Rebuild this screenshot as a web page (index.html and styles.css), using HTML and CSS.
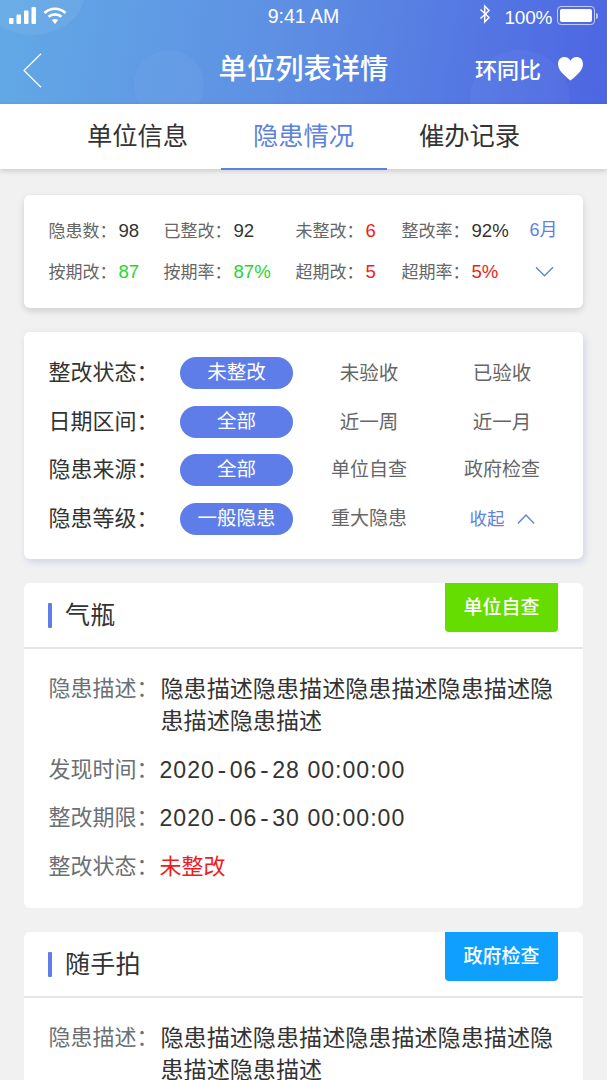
FILE: index.html
```html
<!DOCTYPE html>
<html lang="zh-CN">
<head>
<meta charset="utf-8">
<title>单位列表详情</title>
<link rel="stylesheet" href="styles.css">
</head>
<body>
<div class="screen">
  <header class="hero">
    <span class="orb orb-a"></span><span class="orb orb-b"></span><span class="orb orb-c"></span>
    <div class="status">
      <div class="status-left">
        <svg class="ico-signal" viewBox="0 0 28 17" width="28" height="17"><g fill="#fff"><rect x="0" y="11" width="4.500" height="6" rx="1"/><rect x="7.500" y="7.500" width="4.500" height="9.500" rx="1"/><rect x="15" y="3.500" width="4.500" height="13.500" rx="1"/><rect x="22.500" y="0" width="4.500" height="17" rx="1"/></g></svg>
        <svg class="ico-wifi" viewBox="0 0 24 17" width="24" height="17"><g fill="none" stroke="#fff" stroke-width="2.600"><path d="M1.500 6C7.500 .4 16.500 .4 22.500 6"/><path d="M5.500 9.800C9.300 6.600 14.700 6.600 18.500 9.800"/></g><path d="M8.800 13C10.700 11.500 13.300 11.500 15.200 13L12 17Z" fill="#fff"/></svg>
      </div>
      <div class="status-time">9:41 AM</div>
      <div class="status-right">
        <svg class="ico-bt" viewBox="0 0 12 20" width="12" height="20"><path d="M1.500 5.500L10 13.500L5.700 18V2L10 6.500L1.500 14.500" fill="none" stroke="#fff" stroke-width="1.500"/></svg>
        <span class="battery-pct">100%</span>
        <span class="battery"><span class="battery-fill"></span></span>
        <span class="battery-tip"></span>
      </div>
    </div>
    <div class="nav">
      <svg class="ico-back" viewBox="0 0 19 35" width="19" height="35"><path d="M18 .7L1 17.500L18 34.300" fill="none" stroke="#fff" stroke-width="1.200"/></svg>
      <h1 class="nav-title">单位列表详情</h1>
      <div class="nav-right">
        <span class="nav-compare">环同比</span>
        <svg class="ico-heart" viewBox="0 0 28 26" width="27" height="25"><path d="M14 25.500C9 21 1 15.500 1 8.200C1 3.800 4.200 1 7.700 1C10.500 1 12.800 2.500 14 5C15.200 2.500 17.500 1 20.300 1C23.800 1 27 3.800 27 8.200C27 15.500 19 21 14 25.500Z" fill="#fff"/></svg>
      </div>
    </div>
  </header>

  <nav class="tabs">
    <div class="tab">单位信息</div>
    <div class="tab tab-active">隐患情况</div>
    <div class="tab">催办记录</div>
  </nav>

  <main class="content">
    <section class="card stats">
      <div class="stat"><span class="stat-k">隐患数：</span><span>98</span></div>
      <div class="stat"><span class="stat-k">已整改：</span><span>92</span></div>
      <div class="stat"><span class="stat-k">未整改：</span><span class="red">6</span></div>
      <div class="stat"><span class="stat-k">整改率：</span><span>92%</span></div>
      <div class="stat month">6月</div>
      <div class="stat"><span class="stat-k">按期改：</span><span class="green">87</span></div>
      <div class="stat"><span class="stat-k">按期率：</span><span class="green">87%</span></div>
      <div class="stat"><span class="stat-k">超期改：</span><span class="red">5</span></div>
      <div class="stat"><span class="stat-k">超期率：</span><span class="red">5%</span></div>
      <div class="stat month month-arrow"><svg viewBox="0 0 20 11" width="19" height="11"><path d="M1 1L10 10L19 1" fill="none" stroke="#5f82dc" stroke-width="1.400"/></svg></div>
    </section>

    <section class="card filters">
      <div class="f-label">整改状态：</div><div class="pill">未整改</div><div class="f-opt">未验收</div><div class="f-opt">已验收</div>
      <div class="f-label">日期区间：</div><div class="pill">全部</div><div class="f-opt">近一周</div><div class="f-opt">近一月</div>
      <div class="f-label">隐患来源：</div><div class="pill">全部</div><div class="f-opt f-opt-long">单位自查</div><div class="f-opt f-opt-long">政府检查</div>
      <div class="f-label">隐患等级：</div><div class="pill">一般隐患</div><div class="f-opt f-opt-long">重大隐患</div>
      <div class="f-opt f-collapse">收起<svg viewBox="0 0 20 12" width="18" height="12"><path d="M1 11L10 1.500L19 11" fill="none" stroke="#5f82dc" stroke-width="1.500"/></svg></div>
    </section>

    <article class="card item">
      <div class="item-head"><span class="item-bar"></span><h2 class="item-title">气瓶</h2><span class="badge badge-green">单位自查</span></div>
      <div class="item-body">
        <div class="row"><span class="row-k">隐患描述：</span><span class="row-v">隐患描述隐患描述隐患描述隐患描述隐患描述隐患描述</span></div>
        <div class="row"><span class="row-k">发现时间：</span><span class="row-v row-date">2020<span class="dash">-</span>06<span class="dash">-</span>28 00:00:00</span></div>
        <div class="row"><span class="row-k">整改期限：</span><span class="row-v row-date">2020<span class="dash">-</span>06<span class="dash">-</span>30 00:00:00</span></div>
        <div class="row"><span class="row-k">整改状态：</span><span class="row-v row-alert">未整改</span></div>
      </div>
    </article>

    <article class="card item">
      <div class="item-head"><span class="item-bar"></span><h2 class="item-title">随手拍</h2><span class="badge badge-blue">政府检查</span></div>
      <div class="item-body">
        <div class="row"><span class="row-k">隐患描述：</span><span class="row-v">隐患描述隐患描述隐患描述隐患描述隐患描述隐患描述</span></div>
      </div>
    </article>
  </main>
</div>
</body>
</html>
```
FILE: styles.css
```css
* { box-sizing: border-box; }
html, body { margin: 0; padding: 0; height: 1080px; overflow: hidden; }
body {
  background: #f1f1f1;
  color: #333;
  font-family: "Liberation Sans", "Noto Sans CJK SC", sans-serif;
}
.screen { width: 607px; height: 1080px; overflow: hidden; }

/* Header */
.hero {
  position: relative;
  height: 104px;
  overflow: hidden;
  color: #fff;
  background: linear-gradient(100deg, #62a9e6 0%, #5e90e3 45%, #4d65e2 100%);
}
.orb { position: absolute; border-radius: 50%; background: rgba(255, 255, 255, .04); }
.orb-a { left: 134px; top: 50px; width: 70px; height: 70px; }
.orb-b { left: 470px; top: 50px; width: 100px; height: 100px; }
.orb-c { left: -20px; top: -50px; width: 105px; height: 85px; background: rgba(255, 255, 255, .06); }

.status {
  position: relative;
  height: 32px;
  padding: 0 9px;
  display: grid;
  grid-template-columns: 1fr auto 1fr;
  align-items: center;
}
.status-left { display: flex; align-items: center; gap: 6px; margin-top: -1px; }
.status-time { font-size: 19.500px; line-height: 32px; }
.status-right { display: flex; align-items: center; justify-content: flex-end; }
.ico-bt { margin-right: 14px; margin-top: -5px; }
.battery-pct { font-size: 19px; margin-right: 5px; margin-top: 4px; letter-spacing: -.3px; }
.battery {
  width: 38px; height: 19px;
  padding: 2px;
  border: 1.500px solid rgba(255, 255, 255, .65);
  border-radius: 4px;
  margin-top: -1px;
}
.battery-fill { display: block; height: 100%; background: #fff; border-radius: 2px; }
.battery-tip { width: 2px; height: 6px; margin-left: 1px; background: rgba(255, 255, 255, .6); border-radius: 0 2px 2px 0; }

.nav {
  position: relative;
  height: 72px;
  display: grid;
  grid-template-columns: 1fr auto 1fr;
  align-items: center;
  padding: 0 23px;
}
.ico-back { margin-top: 3px; }
.nav-title { margin: 0; font-size: 28.300px; line-height: 72px; font-weight: 500; margin-top: 1px; }
.nav-right { display: flex; align-items: center; justify-content: flex-end; gap: 16px; margin-top: -1px; }
.nav-compare { font-size: 22px; font-weight: 500; }

/* Tabs */
.tabs {
  position: relative;
  height: 65px;
  display: grid;
  grid-template-columns: 166px 166px 166px;
  justify-content: center;
  background: #fff;
  box-shadow: 0 2px 5px rgba(0, 0, 0, .16);
}
.tab { text-align: center; font-size: 25.300px; line-height: 65px; color: #333; }
.tab-active { color: #5f82dc; border-bottom: 2px solid #5f82dc; height: 66px; }

/* Cards */
.content { padding: 26px 24px 0; display: flex; flex-direction: column; gap: 24px; }
.card { background: #fff; border-radius: 6px; }

.stats {
  height: 113px;
  padding: 15px 0 0 24.500px;
  display: grid;
  grid-template-columns: 115px 132px 106px 128px auto;
  grid-auto-rows: 41px;
  box-shadow: 0 3px 7px rgba(0, 0, 0, .14);
}
.stat { font-size: 18.600px; line-height: 41px; white-space: nowrap; color: #333; }
.stat-k { color: #666; font-size: 17px; margin-right: 2px; }
.month { color: #5f82dc; font-size: 18px; display: flex; align-items: center; }
.month-arrow svg { margin-left: 5px; }
.red { color: #f01c1c; }
.green { color: #1fd631; }

.filters {
  height: 227px;
  padding: 25px 0 0 24.500px;
  display: grid;
  grid-template-columns: 131.500px 113px 152px 114px;
  grid-auto-rows: 32px;
  row-gap: 16.600px;
  align-items: center;
  box-shadow: 2px 3px 7px rgba(90, 110, 200, .22);
}
.f-label { font-size: 22px; line-height: 32px; color: #333; white-space: nowrap; }
.pill {
  height: 32px;
  border-radius: 16px;
  background: #5f7de8;
  color: #fff;
  text-align: center;
  font-size: 19.500px;
  line-height: 31px;
}
.f-opt { font-size: 19.500px; line-height: 32px; text-align: center; color: #666; white-space: nowrap; }
.f-opt-long { font-size: 19px; }
.f-collapse { color: #5f82dc; font-size: 17.500px; display: flex; align-items: center; justify-content: center; gap: 12px; }

.item { position: relative; overflow: hidden; }
.item-head {
  height: 66px;
  padding: 0 0 0 24px;
  display: flex;
  align-items: center;
  border-bottom: 2px solid #e6e6e6;
}
.item-bar { width: 3.500px; height: 25px; background: #5f7de8; border-radius: 1px; margin-right: 14px; }
.item-title { margin: 0 0 0 -.5px; font-size: 25px; font-weight: 400; line-height: 66px; letter-spacing: .3px; }
.badge {
  position: absolute;
  right: 25px; top: 0;
  width: 113px; height: 48.500px;
  border-radius: 0 0 4px 4px;
  color: #fff;
  text-align: center;
  font-size: 19px;
  font-weight: 500;
  line-height: 49px;
}
.badge-green { background: #66dd00; }
.badge-blue { background: #0fa0ff; }

.item-body { padding: 24px 0 25.500px 24.500px; display: flex; flex-direction: column; gap: 16.500px; }
.row { display: flex; align-items: flex-start; line-height: 32px; }
.row-k { flex: 0 0 112px; font-size: 22px; color: #6b7075; white-space: nowrap; }
.row-v { width: 397px; font-size: 23.100px; color: #333; }
.row-date { letter-spacing: 1px; margin-left: -1px; height: 32px; }
.dash {
  font-family: "Liberation Mono", monospace;
  line-height: 0;
}
.row-alert { color: #f01c1c; font-size: 22px; margin-left: -1px; }
```
